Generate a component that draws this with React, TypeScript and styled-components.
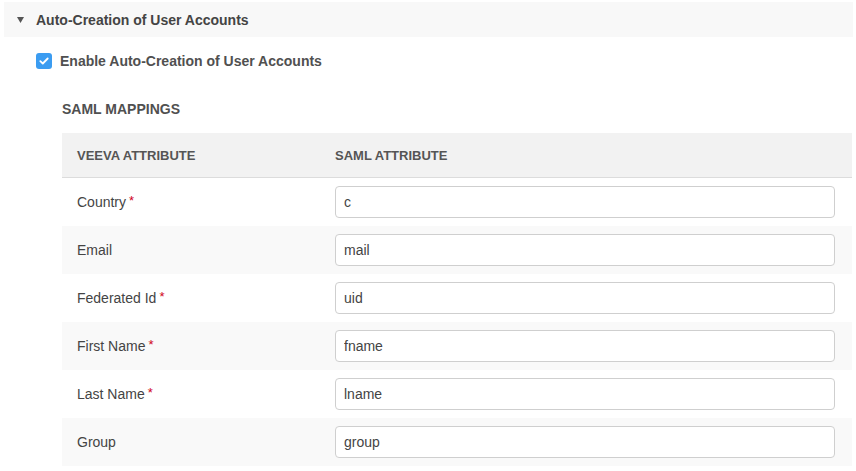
import React from "react";
import styled, { createGlobalStyle } from "styled-components";

const GlobalStyle = createGlobalStyle`
  body {
    margin: 0;
    background: #fff;
    font-family: "Liberation Sans", Arial, sans-serif;
    color: #444;
  }
`;

interface Mapping {
  label: string;
  value: string;
  required?: boolean;
}

const mappings: Mapping[] = [
  { label: "Country", value: "c", required: true },
  { label: "Email", value: "mail" },
  { label: "Federated Id", value: "uid", required: true },
  { label: "First Name", value: "fname", required: true },
  { label: "Last Name", value: "lname", required: true },
  { label: "Group", value: "group" },
];

const App = () => {
  return (
    <>
      <GlobalStyle />
      <Page>
        <SectionHeader>
          <Caret viewBox="0 0 7 6">
            <path d="M0 0 H7 L3.5 6 Z" fill="#555" />
          </Caret>
          <SectionTitle>Auto-Creation of User Accounts</SectionTitle>
        </SectionHeader>

        <Body>
          <CheckRow>
            <CheckBox>
              <svg width="10" height="8" viewBox="0 0 10 8">
                <path
                  d="M1.3 4.2 L3.8 6.5 L8.7 1.5"
                  fill="none"
                  stroke="#fff"
                  strokeWidth="1.8"
                  strokeLinecap="round"
                  strokeLinejoin="round"
                />
              </svg>
            </CheckBox>
            <CheckLabel>Enable Auto-Creation of User Accounts</CheckLabel>
          </CheckRow>

          <Mappings>
            <MappingsTitle>SAML MAPPINGS</MappingsTitle>
            <Table>
              <HeadRow>
                <HeadCell>VEEVA ATTRIBUTE</HeadCell>
                <HeadCell>SAML ATTRIBUTE</HeadCell>
              </HeadRow>
              {mappings.map((m, i) => (
                <Row key={m.label} $striped={i % 2 === 1}>
                  <LabelCell>
                    {m.label}
                    {m.required && <Required>*</Required>}
                  </LabelCell>
                  <InputCell>
                    <TextInput type="text" defaultValue={m.value} />
                  </InputCell>
                </Row>
              ))}
            </Table>
          </Mappings>
        </Body>
      </Page>
    </>
  );
};

const Page = styled.div`
  padding-top: 2px;
  width: 856px;
`;

const SectionHeader = styled.div`
  display: flex;
  align-items: center;
  height: 35px;
  margin: 0 3px 0 4px;
  padding-left: 13px;
  background: #f8f8f8;
`;

const Caret = styled.svg`
  width: 7px;
  height: 6px;
  margin-right: 12px;
  margin-top: 1px;
`;

const SectionTitle = styled.div`
  font-size: 14px;
  font-weight: bold;
  color: #444;
`;

const Body = styled.div`
  padding-left: 36px;
`;

const CheckRow = styled.div`
  display: flex;
  align-items: center;
  margin-top: 16px;
  height: 16px;
`;

const CheckBox = styled.span`
  display: flex;
  align-items: center;
  justify-content: center;
  width: 16px;
  height: 16px;
  border-radius: 3px;
  background: #3b9cf1;
  margin-right: 8px;
`;

const CheckLabel = styled.span`
  font-size: 14px;
  font-weight: bold;
  color: #505050;
`;

const Mappings = styled.div`
  padding-left: 26px;
  padding-right: 4px;
`;

const MappingsTitle = styled.div`
  font-size: 14px;
  font-weight: bold;
  color: #505050;
  margin-top: 32px;
  height: 16px;
  line-height: 16px;
`;

const Table = styled.div`
  margin-top: 16px;
`;

const grid = `
  display: grid;
  grid-template-columns: 258px 1fr;
  align-items: center;
`;

const HeadRow = styled.div`
  ${grid}
  height: 44px;
  background: #f2f2f2;
  border-bottom: 1px solid #dcdcdc;
`;

const HeadCell = styled.div`
  padding-left: 15px;
  font-size: 13px;
  font-weight: bold;
  color: #555;
`;

const Row = styled.div<{ $striped: boolean }>`
  ${grid}
  height: 48px;
  background: ${({ $striped }) => ($striped ? "#f9f9f9" : "#fff")};
`;

const LabelCell = styled.div`
  padding-left: 15px;
  font-size: 14px;
  color: #444;
`;

const Required = styled.span`
  color: #d0021b;
  margin-left: 3px;
  font-size: 13px;
  position: relative;
  top: -2px;
`;

const InputCell = styled.div`
  padding: 0 17px 0 15px;
`;

const TextInput = styled.input`
  box-sizing: border-box;
  width: 100%;
  height: 32px;
  padding: 0 8px;
  border: 1px solid #cfcfcf;
  border-radius: 4px;
  background: #fff;
  font-family: "Liberation Sans", Arial, sans-serif;
  font-size: 14px;
  color: #444;
  outline: none;
`;

export default App;
